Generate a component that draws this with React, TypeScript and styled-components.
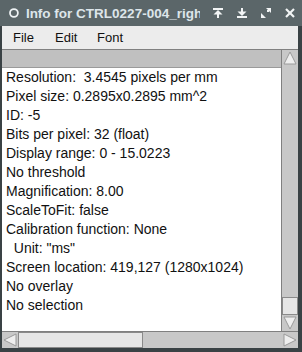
import React from "react";
import styled, { createGlobalStyle } from "styled-components";

const GlobalStyle = createGlobalStyle`
  html, body {
    margin: 0;
    padding: 0;
    background: #2f3538;
  }
`;

const Window = styled.div`
  width: 302px;
  height: 352px;
  display: flex;
  flex-direction: column;
  background: #3a4245;
  overflow: hidden;
`;

const TitleBar = styled.div`
  height: 26px;
  display: flex;
  align-items: center;
  background: #5b6669;
  padding: 0 0 0 8px;
  gap: 6px;
`;

const TitleText = styled.div`
  overflow: hidden;
  white-space: nowrap;
  color: #dde5ea;
  font-family: "Liberation Sans", Arial, sans-serif;
  font-weight: bold;
  font-size: 13.5px;
  width: 176px;
`;

const TitleButtons = styled.div`
  display: flex;
  margin-left: auto;
`;

const TitleButton = styled.div`
  width: 24px;
  height: 26px;
  display: flex;
  align-items: center;
  justify-content: center;
`;

const Body = styled.div`
  flex: 1;
  display: flex;
  flex-direction: column;
  margin: 0 4px 4px 2px;
  min-height: 0;
`;

const MenuBar = styled.div`
  height: 23px;
  display: flex;
  align-items: center;
  background: #ececec;
  padding-left: 11px;
  font-family: "Liberation Sans", Arial, sans-serif;
  font-size: 13px;
  color: #111;
`;

const MenuItem = styled.span`
  width: 42px;
`;

const Main = styled.div`
  flex: 1;
  display: flex;
  min-height: 0;
  border-top: 1px solid #808080;
`;

const ContentColumn = styled.div`
  flex: 1;
  display: flex;
  flex-direction: column;
  min-width: 0;
`;

const HeaderBand = styled.div`
  height: 17px;
  background: #c0c0c0;
  border-bottom: 1px solid #9a9a9a;
`;

const TextArea = styled.div`
  flex: 1;
  background: #fff;
  padding-left: 4px;
  font-family: "Liberation Sans", Arial, sans-serif;
  font-size: 14px;
  line-height: 19px;
  color: #111;
  white-space: pre;
  overflow: hidden;
`;

const VScroll = styled.div`
  width: 16px;
  display: flex;
  flex-direction: column;
  background: #c8c8c8;
  border-left: 1px solid #808080;
`;

const ArrowBox = styled.div`
  width: 16px;
  height: 16px;
  flex: none;
  display: flex;
  align-items: center;
  justify-content: center;
  background: #c8c8c8;
`;

const Track = styled.div`
  flex: 1;
  display: flex;
  flex-direction: column;
  justify-content: flex-end;
`;

const Thumb = styled.div<{ $size: number }>`
  flex: none;
  background: #e6e6e6;
  border: 1px solid #8a8a8a;
  box-sizing: border-box;
  width: 100%;
  height: ${(p) => p.$size}px;
`;

const HScrollRow = styled.div`
  height: 16px;
  display: flex;
  background: #c8c8c8;
  border-top: 1px solid #808080;
`;

const HTrack = styled.div`
  flex: 1;
  display: flex;
`;

const HThumb = styled.div<{ $size: number }>`
  flex: none;
  background: #e6e6e6;
  border: 1px solid #8a8a8a;
  box-sizing: border-box;
  height: 100%;
  width: ${(p) => p.$size}px;
`;

const Tri = ({ dir }: { dir: "up" | "down" | "left" | "right" }) => {
  const pts = {
    up: "8,2 14,14 2,14",
    down: "2,2 14,2 8,14",
    left: "2,8 14,2 14,14",
    right: "2,2 14,8 2,14",
  }[dir];
  return (
    <svg width="16" height="16" viewBox="0 0 16 16">
      <polygon points={pts} fill="#eeeeee" stroke="#9a9a9a" strokeWidth="1" />
    </svg>
  );
};

const lines = [
  "Resolution:  3.4545 pixels per mm",
  "Pixel size: 0.2895x0.2895 mm^2",
  "ID: -5",
  "Bits per pixel: 32 (float)",
  "Display range: 0 - 15.0223",
  "No threshold",
  "Magnification: 8.00",
  "ScaleToFit: false",
  "Calibration function: None",
  "  Unit: \"ms\"",
  "Screen location: 419,127 (1280x1024)",
  "No overlay",
  "No selection",
];

const App: React.FC = () => {
  return (
    <Window>
      <GlobalStyle />
      <TitleBar>
        <svg width="12" height="12" viewBox="0 0 12 12">
          <circle cx="6" cy="6" r="4" fill="none" stroke="#eef2f4" strokeWidth="1.8" />
        </svg>
        <TitleText>Info for CTRL0227-004_right</TitleText>
        <TitleButtons>
          <TitleButton>
            <svg width="12" height="12" viewBox="0 0 12 12" fill="#f2f4f5">
              <rect x="1" y="1" width="10" height="2" />
              <polygon points="6,3 10.5,7.5 1.5,7.5" />
              <rect x="5" y="7" width="2" height="4" />
            </svg>
          </TitleButton>
          <TitleButton>
            <svg width="12" height="12" viewBox="0 0 12 12" fill="#f2f4f5">
              <rect x="5" y="1" width="2" height="4" />
              <polygon points="6,9 10.5,4.5 1.5,4.5" />
              <rect x="1" y="9" width="10" height="2" />
            </svg>
          </TitleButton>
          <TitleButton>
            <svg width="12" height="12" viewBox="0 0 12 12" fill="#f2f4f5">
              <polygon points="11,1 11,6 6,1" />
              <polygon points="1,11 1,6 6,11" />
              <rect x="7" y="3" width="2" height="2" />
            </svg>
          </TitleButton>
          <TitleButton>
            <svg width="12" height="12" viewBox="0 0 12 12" stroke="#f2f4f5" strokeWidth="2.2">
              <line x1="2" y1="2" x2="10" y2="10" />
              <line x1="10" y1="2" x2="2" y2="10" />
            </svg>
          </TitleButton>
        </TitleButtons>
      </TitleBar>
      <Body>
        <MenuBar>
          <MenuItem>File</MenuItem>
          <MenuItem>Edit</MenuItem>
          <MenuItem>Font</MenuItem>
        </MenuBar>
        <Main>
          <ContentColumn>
            <HeaderBand />
            <TextArea>
              {lines.map((l) => (
                <div key={l}>{l}</div>
              ))}
            </TextArea>
          </ContentColumn>
          <VScroll>
            <ArrowBox>
              <Tri dir="up" />
            </ArrowBox>
            <Track>
              <Thumb $size={18} />
            </Track>
            <ArrowBox>
              <Tri dir="down" />
            </ArrowBox>
          </VScroll>
        </Main>
        <HScrollRow>
          <ArrowBox>
            <Tri dir="left" />
          </ArrowBox>
          <HTrack>
            <HThumb $size={125} />
          </HTrack>
          <ArrowBox>
            <Tri dir="right" />
          </ArrowBox>
        </HScrollRow>
      </Body>
    </Window>
  );
};

export default App;
